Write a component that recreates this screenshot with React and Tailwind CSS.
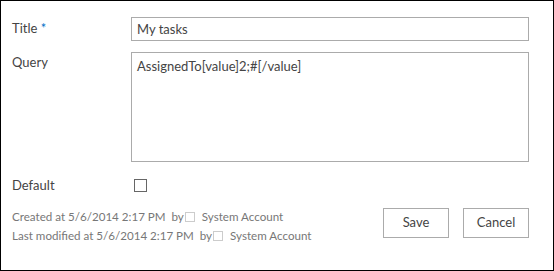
export default function App() {
  return (
    <div
      className="w-[554px] h-[271px] border border-black bg-white pt-[16px] pl-[11px] pr-[24px] text-[#444]"
      style={{ fontFamily: '"Segoe UI", Lato, "Liberation Sans", sans-serif' }}
    >
      <div className="flex items-start">
        <label className="w-[119px] text-[13px] leading-[23px]">
          Title <span className="text-[#0072c6]">*</span>
        </label>
        <div className="flex-1 h-[24px] border border-[#ababab] px-[5px] text-[13px] leading-[22px]">
          My tasks
        </div>
      </div>

      <div className="flex items-start mt-[11px]">
        <label className="w-[119px] text-[13px] leading-[20px]">Query</label>
        <div className="flex-1 h-[110px] border border-[#ababab] px-[5px] pt-[3px] text-[13px] leading-[20px]">
          AssignedTo[value]2;#[/value]
        </div>
      </div>

      <div className="flex items-center mt-[16px]">
        <label className="w-[122px] text-[13px] leading-[14px]">Default</label>
        <span className="block w-[13px] h-[13px] border border-[#666]" />
      </div>

      <div className="flex items-start justify-between mt-[16px]">
        <div className="-mt-[1px] text-[11.6px] leading-[19px] text-[#777]">
          <div className="flex items-center">
            <span>Created at 5/6/2014 2:17 PM&nbsp;&nbsp;by</span>
            <span className="ml-[1px] mr-[7px] w-[10px] h-[10px] border border-[#ccc]" />
            <span>System Account</span>
          </div>
          <div className="flex items-center">
            <span>Last modified at 5/6/2014 2:17 PM&nbsp;&nbsp;by</span>
            <span className="ml-[1px] mr-[7px] w-[10px] h-[10px] border border-[#ccc]" />
            <span>System Account</span>
          </div>
        </div>
        <div className="flex gap-[14px]">
          <button className="w-[66px] h-[30px] border border-[#ababab] bg-white text-[13px] text-[#444]">
            Save
          </button>
          <button className="w-[66px] h-[30px] border border-[#ababab] bg-white text-[13px] text-[#444]">
            Cancel
          </button>
        </div>
      </div>
    </div>
  )
}
